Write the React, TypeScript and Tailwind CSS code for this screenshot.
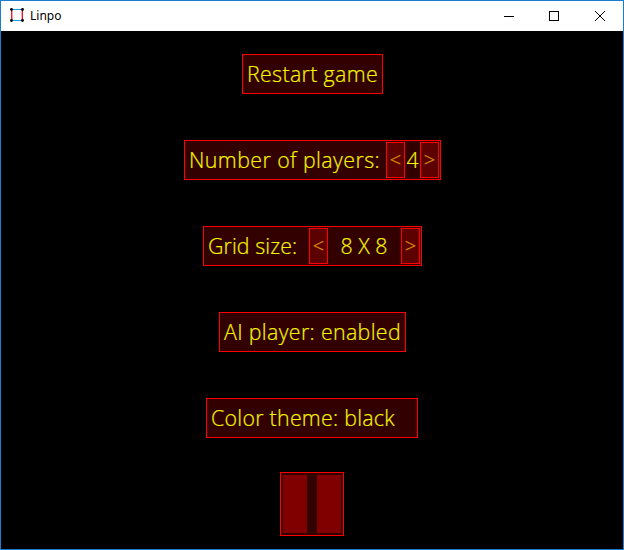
import type { ReactNode } from 'react';

function TitleBar() {
  return (
    <header className="flex h-[30px] items-center bg-white pl-2">
      <svg width="16" height="16" viewBox="0 0 16 16" className="shrink-0">
        <path d="M2.7 2V12M13.3 2V12" stroke="#ed1c24" strokeWidth="1.4" />
        <path d="M2 1.5H14M2 12.5H14" stroke="#00a2e8" />
        <g fill="#000">
          <circle cx="2.5" cy="1.5" r="1.4" />
          <circle cx="13.5" cy="1.5" r="1.4" />
          <circle cx="2.5" cy="12.5" r="1.4" />
          <circle cx="13.5" cy="12.5" r="1.4" />
        </g>
      </svg>
      <span className="ml-[5px] font-['Noto_Sans',sans-serif] text-[12px] leading-4 text-black">Linpo</span>
      <div className="ml-auto flex h-full">
        <button className="flex w-[46px] items-center justify-center" aria-label="Minimize">
          <svg width="10" height="10" shapeRendering="crispEdges"><path d="M0 5.5H10" stroke="#000" /></svg>
        </button>
        <button className="flex w-[45px] items-center justify-center pr-0.5" aria-label="Maximize">
          <svg width="10" height="10" shapeRendering="crispEdges"><path d="M.5.5h9v9h-9z" fill="none" stroke="#000" /></svg>
        </button>
        <button className="flex w-[46px] items-center justify-center" aria-label="Close">
          <svg width="10" height="10"><path d="M0 0L10 10M10 0L0 10" stroke="#000" /></svg>
        </button>
      </div>
    </header>
  );
}

function Row({ className, children }: { className: string; children: ReactNode }) {
  return (
    <div className={`flex h-10 shrink-0 items-center whitespace-pre border border-[#ff0000] bg-[#330000] pl-1 ${className}`}>
      {children}
    </div>
  );
}

function Arrow({ children }: { children: ReactNode }) {
  return (
    <button className="flex h-9 w-[19px] shrink-0 items-center justify-center border border-[#ff0000] bg-[#5c0000] text-[20px] text-[#eaa000]">
      {children}
    </button>
  );
}

export default function App() {
  return (
    <div className="flex h-[550px] w-[624px] flex-col overflow-hidden border border-[#1a7fd4] bg-black">
      <TitleBar />
      <main className="flex flex-1 flex-col items-center pt-[23px] font-['Open_Sans',sans-serif] text-[21.33px] font-light leading-[38px] text-[#f6f600] [-webkit-text-stroke:0.2px]">
        <div className="ml-px flex flex-col items-center gap-[46px]">
          <Row className="w-[141px] tracking-[0.36px]">Restart game</Row>
          <Row className="w-[257px] pr-px">
            <span className="tracking-[0.44px]">Number of players:</span>
            <div className="ml-auto flex items-center">
              <Arrow>&lt;</Arrow>
              <span className="w-[15px] text-center">4</span>
              <Arrow>&gt;</Arrow>
            </div>
          </Row>
          <Row className="w-[219px] pr-px">
            <span className="tracking-[0.1px]">Grid size:</span>
            <div className="ml-auto flex items-center">
              <Arrow>&lt;</Arrow>
              <span className="w-[73px] pr-px text-center">8 X 8</span>
              <Arrow>&gt;</Arrow>
            </div>
          </Row>
          <Row className="w-[187px] tracking-[0.36px]">AI player: enabled</Row>
          <Row className="mr-px w-[212px] tracking-[0.28px]">Color theme: black</Row>
        </div>
        <button aria-label="Pause" className="mt-[34px] flex size-16 justify-between border border-[#ff0000] bg-[#330000] p-[2px]">
          <span className="h-[58px] w-6 bg-[#800000]" />
          <span className="h-[58px] w-6 bg-[#800000]" />
        </button>
      </main>
    </div>
  );
}
